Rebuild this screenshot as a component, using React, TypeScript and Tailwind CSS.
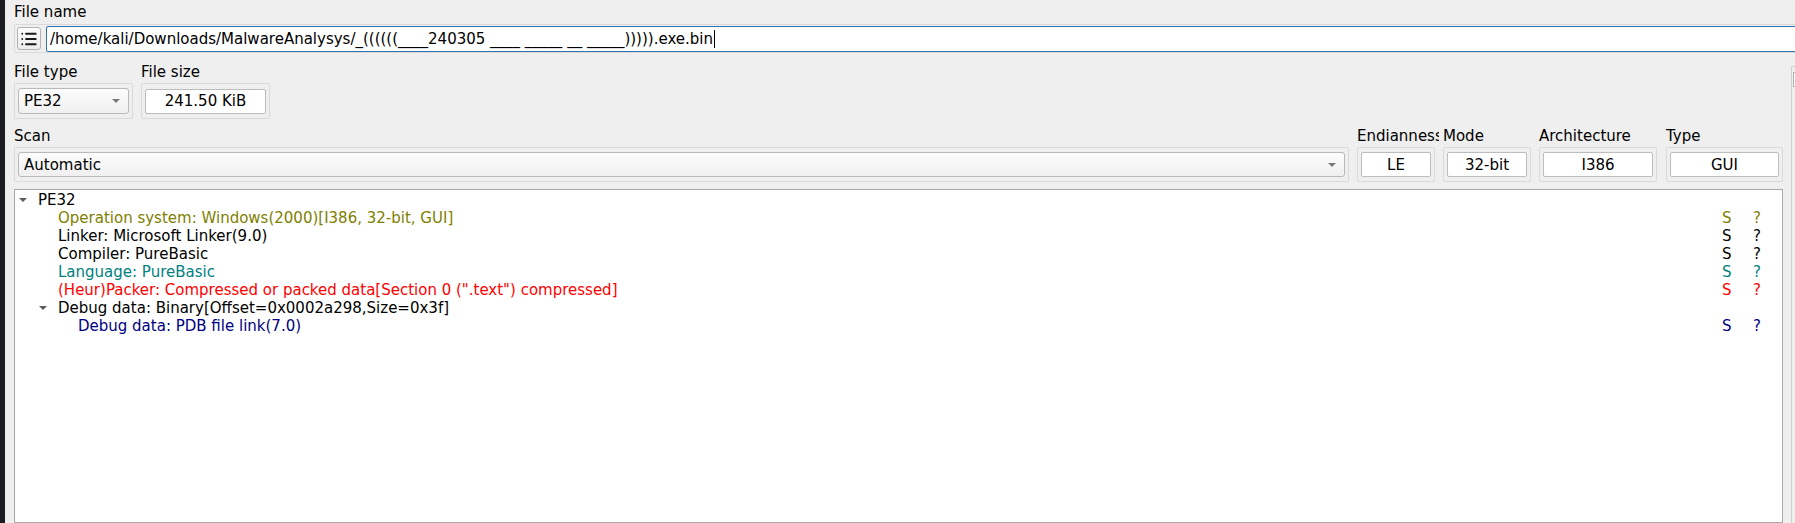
import { List } from "lucide-react";

type Row = {
  level: number;
  text: string;
  color: string;
  arrow?: boolean;
  flags?: boolean;
};

const rows: Row[] = [
  { level: 0, text: "PE32", color: "text-black", arrow: true },
  { level: 1, text: "Operation system: Windows(2000)[I386, 32-bit, GUI]", color: "text-[#808000]", flags: true },
  { level: 1, text: "Linker: Microsoft Linker(9.0)", color: "text-black", flags: true },
  { level: 1, text: "Compiler: PureBasic", color: "text-black", flags: true },
  { level: 1, text: "Language: PureBasic", color: "text-[#008080]", flags: true },
  { level: 1, text: '(Heur)Packer: Compressed or packed data[Section 0 (".text") compressed]', color: "text-[#ff0000]", flags: true },
  { level: 1, text: "Debug data: Binary[Offset=0x0002a298,Size=0x3f]", color: "text-black", arrow: true },
  { level: 2, text: "Debug data: PDB file link(7.0)", color: "text-[#000080]", flags: true },
];

function Arrow() {
  return <span className="h-0 w-0 border-x-[4px] border-t-[4px] border-x-transparent border-t-[#5a5a5a]" />;
}

function Combo({ value, className }: { value: string; className?: string }) {
  return (
    <div
      className={`flex items-center justify-between rounded-[3px] border border-[#b9b9b9] bg-gradient-to-b from-[#fcfcfc] to-[#f0f0f0] pl-[5px] pr-[8px] ${className ?? ""}`}
    >
      <span>{value}</span>
      <span className="h-0 w-0 border-x-[4px] border-t-[4px] border-x-transparent border-t-[#7a7a7a]" />
    </div>
  );
}

function Field({ value, className }: { value: string; className?: string }) {
  return (
    <div className={`flex h-[25px] items-center justify-center rounded-[2px] border border-[#bdbdbd] bg-white ${className ?? ""}`}>
      {value}
    </div>
  );
}

function Frame({ children, className }: { children: React.ReactNode; className?: string }) {
  return (
    <div className={`flex items-center rounded-[2px] border border-[#dadada] px-[3px] ${className ?? ""}`}>{children}</div>
  );
}

export default function App() {
  return (
    <div className="flex h-[523px] w-[1795px] overflow-hidden bg-[#efefef] font-['DejaVu_Sans',sans-serif] text-[15px] leading-[18px] text-black">
      <div className="w-[5px] shrink-0 bg-[#1a1c21]" />

      <div className="flex min-w-0 flex-1 flex-col pl-[9px]">
        <div className="flex h-[24px] items-center">File name</div>
        <div className="-mr-[40px] flex h-[29px] items-center gap-[5px] rounded-[2px] border border-[#dadada] pl-[2px]">
          <button
            type="button"
            className="flex h-[23px] w-[24px] items-center justify-center rounded-[3px] border border-[#b4b4b4] bg-gradient-to-b from-[#fcfcfc] to-[#eeeeee] text-[#1a1a1a]"
          >
            <List className="size-[18px]" strokeWidth={2.4} />
          </button>
          <div className="flex h-[26px] flex-1 items-center rounded-[2px] border border-[#3072b0] bg-white pl-[3px]">
            <span className="whitespace-pre">/home/kali/Downloads/MalwareAnalysys/_((((((____240305 ____ _____ __ _____))))).exe.bin</span>
            <span className="ml-[1px] h-[18px] w-px bg-black" />
          </div>
        </div>

        <div className="flex min-h-0 flex-1">
          <div className="flex min-w-0 flex-1 flex-col pr-[8px]">
            <div className="mt-[8px] flex gap-[8px]">
              <div className="flex w-[119px] flex-col">
                <div className="flex h-[22px] items-center">File type</div>
                <Frame className="h-[36px]">
                  <Combo value="PE32" className="h-[26px] w-full" />
                </Frame>
              </div>
              <div className="flex w-[129px] flex-col">
                <div className="flex h-[22px] items-center">File size</div>
                <Frame className="h-[36px]">
                  <Field value="241.50 KiB" className="w-full" />
                </Frame>
              </div>
            </div>

            <div className="mt-[6px] flex">
              <div className="flex min-w-0 flex-1 flex-col pr-[8px]">
                <div className="flex h-[22px] items-center">Scan</div>
                <Frame className="h-[35px]">
                  <Combo value="Automatic" className="h-[25px] w-full" />
                </Frame>
              </div>
              <div className="flex w-[86px] flex-col">
                <div className="flex h-[22px] w-[82px] items-center overflow-hidden whitespace-nowrap">Endianness</div>
                <Frame className="h-[35px] w-[78px]">
                  <Field value="LE" className="w-full" />
                </Frame>
              </div>
              <div className="flex w-[96px] flex-col">
                <div className="flex h-[22px] items-center">Mode</div>
                <Frame className="h-[35px] w-[88px]">
                  <Field value="32-bit" className="w-full" />
                </Frame>
              </div>
              <div className="flex w-[127px] flex-col">
                <div className="flex h-[22px] items-center">Architecture</div>
                <Frame className="h-[35px] w-[118px]">
                  <Field value="I386" className="w-full" />
                </Frame>
              </div>
              <div className="flex w-[117px] flex-col">
                <div className="flex h-[22px] items-center">Type</div>
                <Frame className="h-[35px] w-[117px]">
                  <Field value="GUI" className="w-full" />
                </Frame>
              </div>
            </div>

            <div className="mt-[7px] min-h-0 flex-1 border border-[#a9a9a9] bg-white pt-[1px]">
              {rows.map((row, i) => (
                <div key={i} className={`flex h-[18px] items-center ${row.color}`}>
                  <div style={{ width: row.level * 20 }} className="shrink-0" />
                  <div className="flex w-[16px] shrink-0 justify-center">{row.arrow && <Arrow />}</div>
                  <div className="ml-[7px] flex-1 whitespace-nowrap">{row.text}</div>
                  {row.flags && (
                    <>
                      <div className="w-[31px] shrink-0">S</div>
                      <div className="w-[29px] shrink-0">?</div>
                    </>
                  )}
                </div>
              ))}
            </div>
          </div>

          <div className="mt-[13px] w-[4px] shrink-0 rounded-tl-[2px] border-l border-t border-[#d0d0d0] pl-[1px] pt-[5px]">
            <div className="h-[15px] border-y border-l border-[#b0b0b0] bg-white" />
          </div>
        </div>
      </div>
    </div>
  );
}
